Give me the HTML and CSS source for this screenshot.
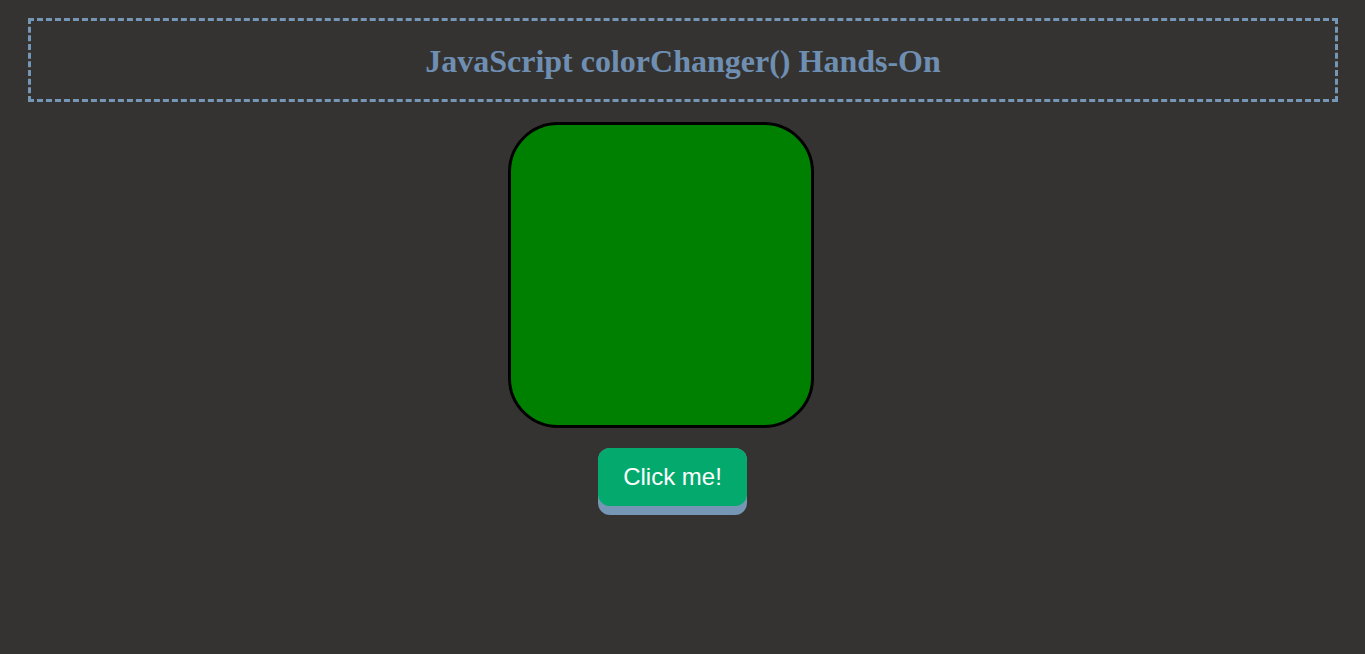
FILE: index.html
```html
<!DOCTYPE html>
<html>
<head>
<meta charset="utf-8">
<link rel="stylesheet" href="styles.css">
</head>
<body>
<header class="title-box">
  <h1 class="title">JavaScript colorChanger() Hands-On</h1>
</header>
<div class="square"></div>
<div class="btn-wrap">
  <button class="btn">Click me!</button>
</div>
</body>
</html>
```
FILE: styles.css
```css
html, body {
  background: #353331;
}
body {
  margin: 8px;
  min-height: 600px;
}
.title-box {
  margin: 10px 19px 0 20px;
  border: 3px dashed #7596b5;
  height: 78px;
  display: flex;
  align-items: center;
  justify-content: center;
}
.title {
  margin: 2px 0 0 0;
  font-family: "Liberation Serif", "Times New Roman", serif;
  font-weight: bold;
  font-size: 32px;
  color: #6f8fb2;
}
.square {
  margin: 20px 0 0 500px;
  width: 300px;
  height: 300px;
  border: 3px solid #000;
  border-radius: 50px;
  background: #008000;
}
.btn-wrap {
  margin: 20px 0 0 590px;
  width: 149px;
  height: 67px;
  border-radius: 12px;
  background: #7596b5;
}
.btn {
  display: block;
  width: 149px;
  height: 58px;
  border: none;
  border-radius: 12px;
  background: #04aa6d;
  color: #fff;
  font-family: "Liberation Sans", Arial, sans-serif;
  font-size: 24px;
  padding: 0;
}
```
